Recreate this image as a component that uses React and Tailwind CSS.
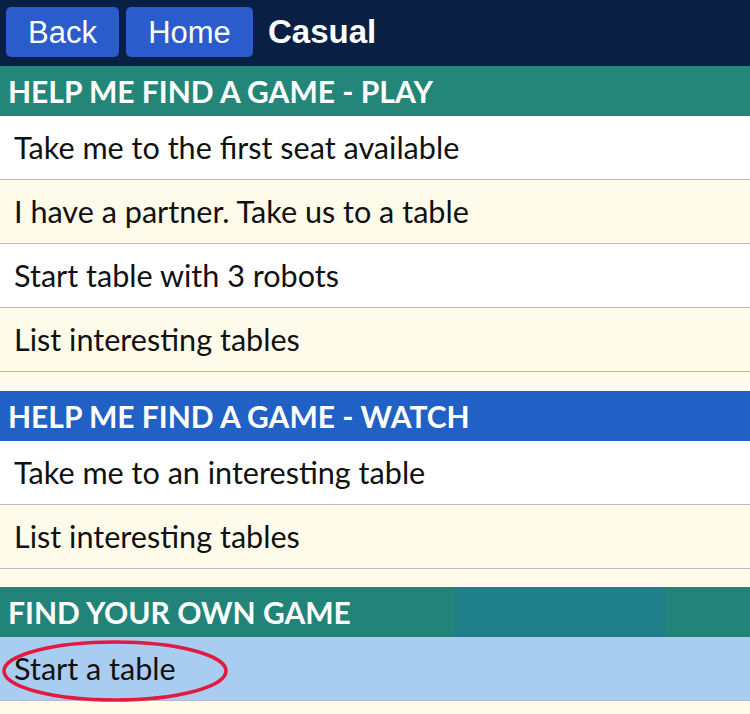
import React from 'react'

const lato = { fontFamily: 'Lato, "Open Sans", sans-serif' }

function SectionHeader({ title, tone }) {
  const bg =
    tone === 'blue'
      ? 'bg-[#2160c4]'
      : tone === 'band'
        ? 'bg-[linear-gradient(to_right,#228479_0,#228479_455px,#1f7f88_455px,#1f7f88_665px,#228479_665px)]'
        : 'bg-[#248579]'
  return (
    <div className={`${bg} h-[50px] flex items-center pl-2 text-white text-[30px] font-bold`} style={lato}>
      {title}
    </div>
  )
}

function Row({ label, cream, highlight, circled }) {
  const bg = highlight ? 'bg-[#a8cdf1]' : cream ? 'bg-[#fffbea]' : 'bg-white'
  return (
    <div
      className={`${bg} h-[64px] flex items-center pl-[14px] text-[30.6px] text-[#111] border-b border-[#bdb6c6] relative`}
      style={lato}
    >
      <span>{label}</span>
      {circled && (
        <svg className="absolute left-[1px] top-[2px]" width="230" height="64" viewBox="0 0 230 64">
          <ellipse cx="114" cy="32" rx="111" ry="29" fill="none" stroke="#e3193f" strokeWidth="3.5" />
        </svg>
      )}
    </div>
  )
}

export default function App() {
  return (
    <div className="w-[750px] h-[714px] overflow-hidden bg-[#fffbea]">
      {/* top bar */}
      <div className="h-[66px] bg-[#0a1f44] flex items-start pt-[7px] pl-[6px] gap-[7px]" style={{ fontFamily: '"Liberation Sans", Arial, sans-serif' }}>
        <button className="w-[113px] h-[50px] rounded-[5px] bg-[#2a5ccc] text-white text-[31px] leading-none">
          Back
        </button>
        <button className="w-[127px] h-[50px] rounded-[5px] bg-[#2a5ccc] text-white text-[31px] leading-none">
          Home
        </button>
        <div className="h-[50px] flex items-center pl-[8px] text-white text-[33px] font-bold">Casual</div>
      </div>

      <SectionHeader title="HELP ME FIND A GAME - PLAY" />
      <Row label="Take me to the first seat available" />
      <Row label="I have a partner. Take us to a table" cream />
      <Row label="Start table with 3 robots" />
      <Row label="List interesting tables" cream />

      <div className="h-[19px]" />
      <SectionHeader title="HELP ME FIND A GAME - WATCH" tone="blue" />
      <Row label="Take me to an interesting table" />
      <Row label="List interesting tables" cream />

      <div className="h-[18px]" />
      <SectionHeader title="FIND YOUR OWN GAME" tone="band" />
      <Row label="Start a table" highlight circled />
    </div>
  )
}
